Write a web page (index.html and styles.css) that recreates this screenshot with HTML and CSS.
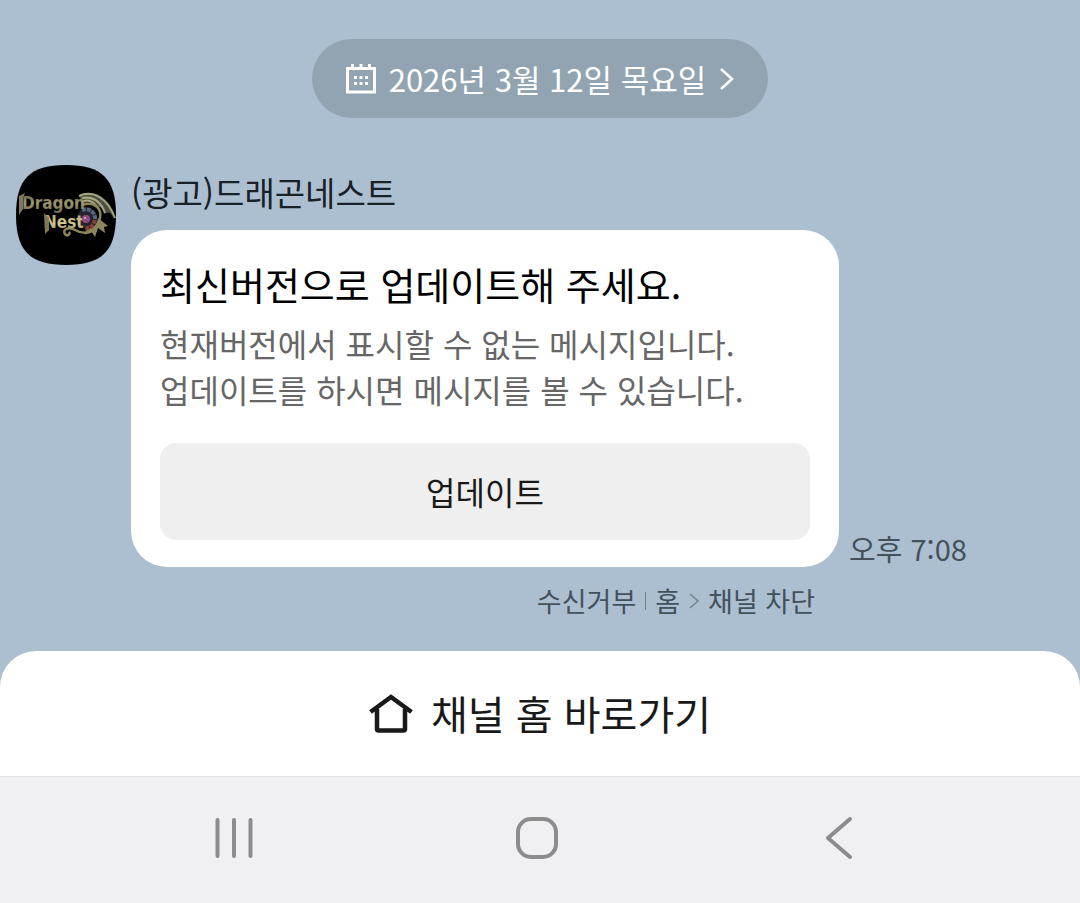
FILE: index.html
```html
<!DOCTYPE html>
<html lang="ko">
<head>
<meta charset="utf-8">
<meta name="viewport" content="width=device-width, initial-scale=1">
<title>드래곤네스트</title>
<link rel="stylesheet" href="styles.css">
</head>
<body>
<main class="chat">
  <button class="date" type="button">
    <svg class="date-icon" width="30" height="30" viewBox="0 0 30 30" fill="none" aria-hidden="true">
      <path d="M1.5 4.5h27v23.500h-27zM6.500 0v4M15 0v4M23.500 0v4" stroke="#fff" stroke-width="3"/>
      <path d="M8 12h3v3h-3zM13.500 12h3v3h-3zM19 12h3v3h-3zM8 18h3v3h-3zM13.500 18h3v3h-3zM19 18h3v3h-3z" fill="#fff"/>
    </svg>
    <span>2026년 3월 12일 목요일</span>
    <svg class="date-arrow" width="14" height="22" viewBox="0 0 14 22" fill="none" stroke="#fff" stroke-width="2.500" aria-hidden="true"><path d="M1 1l11 10L1 21"/></svg>
  </button>

  <article class="message">
    <svg class="avatar" width="100" height="100" viewBox="0 0 100 100" role="img" aria-label="Dragon Nest">
      <defs>
        <linearGradient id="gold" x1="0" y1="0" x2="0" y2="1"><stop offset="0" stop-color="#5d573f"/><stop offset=".5" stop-color="#a39a70"/><stop offset="1" stop-color="#6d6649"/></linearGradient>
        <linearGradient id="pale" x1="0" y1="0" x2="0" y2="1"><stop offset="0" stop-color="#aaa06f"/><stop offset=".6" stop-color="#d2c994"/><stop offset="1" stop-color="#807650"/></linearGradient>
      </defs>
      <path d="M50 0C86 0 100 14 100 50S86 100 50 100 0 86 0 50 14 0 50 0z" fill="#000"/>
      <path d="M63 31C71 24 95 28 99 54C95 48 92 46 89 49C89 44 85 41 81 43C79 38 75 36 67 38z" fill="#4d5040"/>
      <path d="M63 31C77 24 92 34 99 53M66 33C78 31 85 37 89 48M67 36C74 34 78 37 81 42" fill="none" stroke="#a5a581" stroke-width="2"/>
      <path d="M66 40C78 36 86 43 84 53C82 67 70 71 59 65C52 61 46 65 49 69C51 72 55 69 53 67" fill="none" stroke="#8d865c" stroke-width="2.500"/>
      <path d="M82 53l10 8-4 1 1 6-7-5-3 9-4-6-6 4 2-6C78 63 81 59 82 53z" fill="#8d865c"/>
      <circle cx="71" cy="53" r="10" fill="#25242c"/>
      <path d="M66 45C73 42 80 48 79 54" fill="none" stroke="#526982" stroke-width="4" stroke-dasharray="4 1"/>
      <path d="M79 55C77 62 73 64 68 63" fill="none" stroke="#82433b" stroke-width="4" stroke-dasharray="4 1"/>
      <text class="logo-text" x="6" y="44" fill="url(#gold)">Dragon</text>
      <text class="logo-text" x="28" y="63" fill="url(#pale)">Nest</text>
      <path d="M3 31l6-3-2 5v11l-4 6zM28 48l5 5v12l-4 4z" fill="#80785a"/>
      <circle cx="70" cy="54" r="4" fill="#8d4d82"/>
      <circle cx="69" cy="53" r="1" fill="#e1a9d5"/>
    </svg>
    <div class="content">
      <h1 class="sender">(광고)드래곤네스트</h1>
      <div class="bubble-row">
        <section class="bubble">
          <h2 class="title">최신버전으로 업데이트해 주세요.</h2>
          <p class="body">현재버전에서 표시할 수 없는 메시지입니다.<br>업데이트를 하시면 메시지를 볼 수 있습니다.</p>
          <button class="update" type="button">업데이트</button>
        </section>
        <time class="time" datetime="2026-03-12T19:08">오후 7:08</time>
      </div>
      <nav class="links" aria-label="채널 수신 설정">
        <a href="#unsubscribe">수신거부</a>
        <span class="divider"></span>
        <a href="#home">홈</a>
        <svg width="10" height="16" viewBox="0 0 10 16" fill="none" stroke="#71818e" stroke-width="1.500" aria-hidden="true"><path d="M1 1l8 7-8 7"/></svg>
        <a href="#block">채널 차단</a>
      </nav>
    </div>
  </article>
</main>

<a class="channel" href="#channel">
  <svg width="44" height="40" viewBox="0 0 44 40" fill="none" stroke="#191919" stroke-width="4.500" aria-hidden="true"><path d="M1.500 18L22 3l20.500 15M8 15v20q0 1.500 1.500 1.500h25q1.500 0 1.500-1.500V15"/></svg>
  <span>채널 홈 바로가기</span>
</a>

<nav class="system" aria-label="시스템">
  <button type="button" aria-label="최근 앱"><svg width="40" height="42" viewBox="0 0 40 42"><path d="M3.500 3v36M20 3v36M36.500 3v36"/></svg></button>
  <button type="button" aria-label="홈"><svg width="44" height="44" viewBox="0 0 44 44"><rect x="3" y="3" width="38" height="38" rx="13"/></svg></button>
  <button type="button" aria-label="뒤로"><svg width="28" height="44" viewBox="0 0 28 44"><path d="M25 3L3 22l22 19"/></svg></button>
</nav>
</body>
</html>
```
FILE: styles.css
```css
* { box-sizing: border-box; }
body {
  margin: 0;
  min-height: 100vh;
  display: flex;
  flex-direction: column;
  background: #abbfd1;
  font-family: "Noto Sans CJK KR", sans-serif;
}
button { border: 0; font: inherit; }
a { color: inherit; text-decoration: none; }
svg { display: block; flex: none; }
.chat {
  flex: 1;
  display: flex;
  flex-direction: column;
  padding: 39px 16px 30px;
}
.date {
  align-self: center;
  display: flex;
  align-items: center;
  padding: 16px 34px;
  border-radius: 40px;
  background: #92a4b2;
  color: #fff;
  font-size: 31px;
  line-height: 47px;
}
.date-icon { margin-right: 13px; }
.date-arrow { margin-left: 14px; }
.message {
  display: flex;
  align-items: flex-start;
  gap: 15px;
  margin-top: 47px;
}
.logo-text { font-family: "DejaVu Sans Condensed", "DejaVu Sans", sans-serif; font-size: 17px; font-weight: 700; font-stretch: condensed; }
.content { flex: 1; max-width: 840px; }
.sender {
  margin: 0 0 10px;
  color: #172126;
  font-size: 33px;
  line-height: 55px;
  font-weight: 400;
}
.bubble-row { display: flex; align-items: flex-end; gap: 10px; }
.bubble {
  flex: 0 1 708px;
  padding: 26px 29px 27px;
  border-radius: 36px;
  background: #fff;
}
.title {
  margin: 0;
  color: #000;
  font-size: 38px;
  line-height: 56px;
  font-weight: 400;
}
.body {
  margin: 8px 0 31px;
  color: #666;
  font-size: 32px;
  line-height: 46px;
}
.update {
  display: block;
  width: 100%;
  padding: 24px;
  border-radius: 16px;
  background: #efefef;
  color: #191919;
  font-size: 32px;
  line-height: 49px;
}
.time {
  color: #43515b;
  font-size: 29px;
  line-height: 38px;
  white-space: nowrap;
}
.links {
  display: flex;
  align-items: center;
  justify-content: flex-end;
  max-width: 684px;
  margin-top: 14px;
  gap: 9px;
  color: #43515b;
  font-size: 27px;
  line-height: 40px;
}
.divider { width: 1px; height: 18px; background: #71818e; }
.channel {
  display: flex;
  align-items: center;
  justify-content: center;
  gap: 18px;
  padding: 32px;
  border-radius: 36px 36px 0 0;
  background: #fff;
  color: #191919;
  font-size: 40px;
  line-height: 61px;
}
.system {
  display: flex;
  align-items: center;
  justify-content: space-between;
  padding: 35px 215px 39px 208px;
  border-top: 1px solid #e5e5e6;
  background: #f0f0f3;
}
.system button { display: flex; align-items: center; justify-content: center; width: 52px; height: 52px; padding: 0; background: none; }
.system svg { fill: none; stroke: #8c8c8c; stroke-width: 4; stroke-linecap: round; stroke-linejoin: round; }
```
